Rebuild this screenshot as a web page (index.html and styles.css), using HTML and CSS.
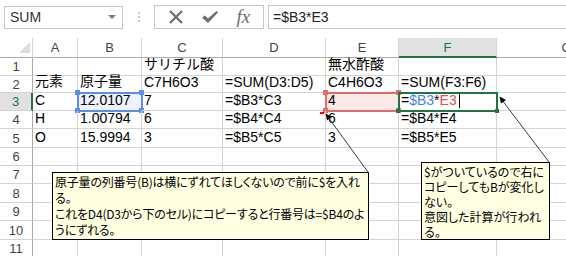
FILE: index.html
```html
<!DOCTYPE html>
<html>
  <head>
    <meta http-equiv="Content-Type" content="text/html;charset=utf-8" />
    <title>Sheet</title>
    <link rel="stylesheet" href="styles.css">
  </head>

  <body>
    <!-- Formula bar -->
    <div class="toolbar">
      <div class="namebox">
        <span>SUM</span>
        <span class="drop"></span>
      </div>
      <div class="grip"><i></i><i></i><i></i></div>
      <div class="fnbox">
        <svg width="16" height="14" viewBox="0 0 16 14">
          <path d="M2 1 L14 13 M14 1 L2 13" stroke="#6d6d6d" stroke-width="2.2" fill="none" />
        </svg>
        <svg width="18" height="14" viewBox="0 0 18 14">
          <path d="M1 7.5 L4 5.5 L7 8.5 L15.5 1 L17 2.5 L7 13 Z" fill="#6d6d6d" />
        </svg>
        <span class="fx">fx</span>
      </div>
      <div class="formula">=$B3*E3</div>
    </div>

    <!-- Sheet -->
    <div class="sheet">
      <div class="row head">
        <div class="cell corner"><span class="tri"></span></div>
        <div class="cell col">A</div>
        <div class="cell col">B</div>
        <div class="cell col">C</div>
        <div class="cell col">D</div>
        <div class="cell col">E</div>
        <div class="cell col active">F</div>
        <div class="cell col">G</div>
      </div>

      <div class="row r1">
        <div class="cell num">1</div>
        <div class="cell"></div>
        <div class="cell"></div>
        <div class="cell">サリチル酸</div>
        <div class="cell"></div>
        <div class="cell">無水酢酸</div>
        <div class="cell"></div>
        <div class="cell"></div>
      </div>

      <div class="row r2">
        <div class="cell num">2</div>
        <div class="cell">元素</div>
        <div class="cell">原子量</div>
        <div class="cell">C7H6O3</div>
        <div class="cell">=SUM(D3:D5)</div>
        <div class="cell">C4H6O3</div>
        <div class="cell">=SUM(F3:F6)</div>
        <div class="cell"></div>
      </div>

      <div class="row r3">
        <div class="cell num active">3</div>
        <div class="cell">C</div>
        <div class="cell ref ref-blue">12.0107
          <i class="h tl"></i><i class="h tr"></i><i class="h bl"></i><i class="h br"></i>
        </div>
        <div class="cell">7</div>
        <div class="cell">=$B3*C3</div>
        <div class="cell ref ref-red">4
          <i class="h tl"></i><i class="h tr"></i><i class="h bl"></i><i class="h br"></i>
        </div>
        <div class="cell current">=<span class="c-blue">$B3</span>*<span class="c-red">E3</span><span class="caret"></span>
          <i class="h bl"></i><i class="h br"></i>
        </div>
        <div class="cell"></div>
      </div>

      <div class="row r4">
        <div class="cell num">4</div>
        <div class="cell">H</div>
        <div class="cell">1.00794</div>
        <div class="cell">6</div>
        <div class="cell">=$B4*C4</div>
        <div class="cell">6</div>
        <div class="cell">=$B4*E4</div>
        <div class="cell"></div>
      </div>

      <div class="row r5">
        <div class="cell num">5</div>
        <div class="cell">O</div>
        <div class="cell">15.9994</div>
        <div class="cell">3</div>
        <div class="cell">=$B5*C5</div>
        <div class="cell">3</div>
        <div class="cell">=$B5*E5</div>
        <div class="cell"></div>
      </div>

      <div class="row r6">
        <div class="cell num">6</div>
        <div class="cell"></div><div class="cell"></div><div class="cell"></div>
        <div class="cell"></div><div class="cell"></div><div class="cell"></div><div class="cell"></div>
      </div>
      <div class="row r7">
        <div class="cell num">7</div>
        <div class="cell"></div><div class="cell"></div><div class="cell"></div>
        <div class="cell"></div><div class="cell"></div><div class="cell"></div><div class="cell"></div>
      </div>
      <div class="row r8">
        <div class="cell num">8</div>
        <div class="cell"></div><div class="cell"></div><div class="cell"></div>
        <div class="cell"></div><div class="cell"></div><div class="cell"></div><div class="cell"></div>
      </div>
      <div class="row r9">
        <div class="cell num">9</div>
        <div class="cell"></div><div class="cell"></div><div class="cell"></div>
        <div class="cell"></div><div class="cell"></div><div class="cell"></div><div class="cell"></div>
      </div>
      <div class="row r10">
        <div class="cell num">10</div>
        <div class="cell"></div><div class="cell"></div><div class="cell"></div>
        <div class="cell"></div><div class="cell"></div><div class="cell"></div><div class="cell"></div>
      </div>
      <div class="row r11">
        <div class="cell num">11</div>
        <div class="cell"></div><div class="cell"></div><div class="cell"></div>
        <div class="cell"></div><div class="cell"></div><div class="cell"></div><div class="cell"></div>
      </div>

      <!-- comment indicator -->
      <span class="mark"></span>

      <!-- callout arrows -->
      <svg class="arrows" width="566" height="218" viewBox="0 38 566 218">
        <line x1="368" y1="172" x2="328" y2="117" stroke="#3a3a3a" stroke-width="1" />
        <path d="M325.5 113.5 L332 117 L327 120.5 Z" fill="#000" />
        <line x1="549" y1="162" x2="502" y2="100" stroke="#3a3a3a" stroke-width="1" />
        <path d="M499.5 96.5 L506 100 L501 103.5 Z" fill="#000" />
      </svg>

      <div class="note note-a">
        原子量の列番号(B)は横にずれてほしくないので前に$を入れ<br>
        る。<br>
        これをD4(D3から下のセル)にコピーすると行番号は=$B4のよ<br>
        うにずれる。
      </div>

      <div class="note note-b">
        $がついているので右に<br>
        コピーしてもBが変化し<br>
        ない。<br>
        意図した計算が行われ<br>
        る。
      </div>
    </div>
  </body>
</html>
```

FILE: styles.css
```css
body {
  margin: 0;
  background-color: #ffffff;
  color: #000000;
  font-family: "Liberation Sans", "Noto Sans CJK JP", sans-serif;
  font-size: 14px;
  overflow: hidden;
}

/* ---- formula bar ---- */

.toolbar {
  display: flex;
  align-items: center;
  height: 24px;
  margin-top: 5px;
}

.namebox {
  display: flex;
  align-items: center;
  justify-content: space-between;
  box-sizing: border-box;
  width: 119px;
  height: 23px;
  margin-left: 4px;
  padding: 0 6px 0 5px;
  border: 1px solid #c6c6c6;
  color: #333333;
}

.drop {
  width: 0;
  height: 0;
  border-left: 4px solid transparent;
  border-right: 4px solid transparent;
  border-top: 4px solid #7a7a7a;
}

.grip {
  display: flex;
  flex-direction: column;
  gap: 2px;
  width: 31px;
  align-items: center;
}

.grip i {
  width: 2px;
  height: 2px;
  background-color: #c4c4c4;
}

.fnbox {
  display: flex;
  align-items: center;
  justify-content: space-around;
  box-sizing: border-box;
  width: 110px;
  height: 24px;
  padding: 0 4px;
  border: 1px solid #c6c6c6;
}

.fx {
  font-family: "Liberation Serif", serif;
  font-style: italic;
  font-size: 19px;
  color: #6d6d6d;
}

.formula {
  flex: 1;
  box-sizing: border-box;
  height: 24px;
  margin-left: 4px;
  padding: 3px 0 0 4px;
  border-top: 1px solid #c6c6c6;
  border-bottom: 1px solid #c6c6c6;
  border-left: 1px solid #c6c6c6;
  color: #222222;
}

/* ---- sheet grid ---- */

.sheet {
  position: relative;
  margin-top: 9px;
  overflow: hidden;
}

.row {
  display: grid;
  grid-template-columns: 33px 45px 64px 81px 103px 73px 98px 140px;
}

.cell {
  box-sizing: border-box;
  border-right: 1px solid #d4d4d4;
  border-bottom: 1px solid #d4d4d4;
  padding: 0 0 2px 2px;
  display: flex;
  align-items: flex-end;
  white-space: nowrap;
  overflow: visible;
  position: relative;
}

.head .cell {
  height: 20px;
  align-items: center;
  justify-content: center;
  padding: 0;
  color: #444444;
  font-size: 13px;
  border-bottom: 1px solid #ababab;
}

.head .corner {
  justify-content: flex-end;
  align-items: flex-end;
  padding: 0 2px 4px 0;
}

.tri {
  width: 0;
  height: 0;
  border-left: 11px solid transparent;
  border-bottom: 11px solid #dcdcdc;
}

.head .active {
  background-color: #e1e1e1;
  color: #217346;
  border-bottom: 2px solid #217346;
}

.num {
  justify-content: center;
  align-items: center;
  padding: 0;
  color: #444444;
  font-size: 13px;
  border-right: 1px solid #ababab;
}

.num.active {
  background-color: #e1e1e1;
  color: #217346;
  border-right: 2px solid #217346;
}

.r1 .cell { height: 18px; }
.r2 .cell { height: 17px; }
.r3 .cell { height: 18px; }
.r4 .cell { height: 18px; }
.r5 .cell { height: 19px; }
.r6 .cell { height: 18px; }
.r7 .cell { height: 18px; }
.r8 .cell { height: 19px; }
.r9 .cell { height: 18px; }
.r10 .cell { height: 19px; }
.r11 .cell { height: 18px; }

/* ---- reference highlights ---- */

.ref-blue {
  background-color: #eef2fc;
  outline: 2px solid #5b8ee6;
  outline-offset: -1px;
}

.ref-red {
  background-color: #fbe8e8;
  outline: 2px solid #e36b6b;
  outline-offset: -1px;
}

.current {
  outline: 2px solid #217346;
  outline-offset: -1px;
  z-index: 2;
}

.h {
  position: absolute;
  width: 5px;
  height: 5px;
}

.ref-blue .h { background-color: #5b8ee6; }
.ref-red .h { background-color: #e36b6b; }
.current .h { background-color: #217346; width: 4px; height: 4px; }

.tl { left: -3px; top: -3px; }
.tr { right: -3px; top: -3px; }
.bl { left: -3px; bottom: -3px; }
.br { right: -3px; bottom: -3px; }

.c-blue { color: #4a7fe0; }
.c-red { color: #e0504f; }

.caret {
  display: inline-block;
  width: 1px;
  height: 14px;
  margin-left: 2px;
  background-color: #000000;
}

.mark {
  position: absolute;
  left: 320px;
  top: 74px;
  width: 4px;
  height: 2px;
  background-color: #ff0000;
}

/* ---- comments ---- */

.arrows {
  position: absolute;
  left: 0;
  top: 0;
  z-index: 3;
}

.note {
  position: absolute;
  box-sizing: border-box;
  background-color: #ffffe1;
  border: 1px solid #000000;
  font-family: "Noto Sans CJK JP", sans-serif;
  font-feature-settings: "palt";
  font-size: 12px;
  white-space: nowrap;
  overflow: hidden;
  padding: 1px 2px;
  z-index: 4;
}

.note-a {
  left: 52px;
  top: 134px;
  width: 317px;
  height: 68px;
  line-height: 16px;
  letter-spacing: -0.2px;
}

.note-b {
  left: 421px;
  top: 124px;
  width: 129px;
  height: 78px;
  line-height: 15px;
}
```
